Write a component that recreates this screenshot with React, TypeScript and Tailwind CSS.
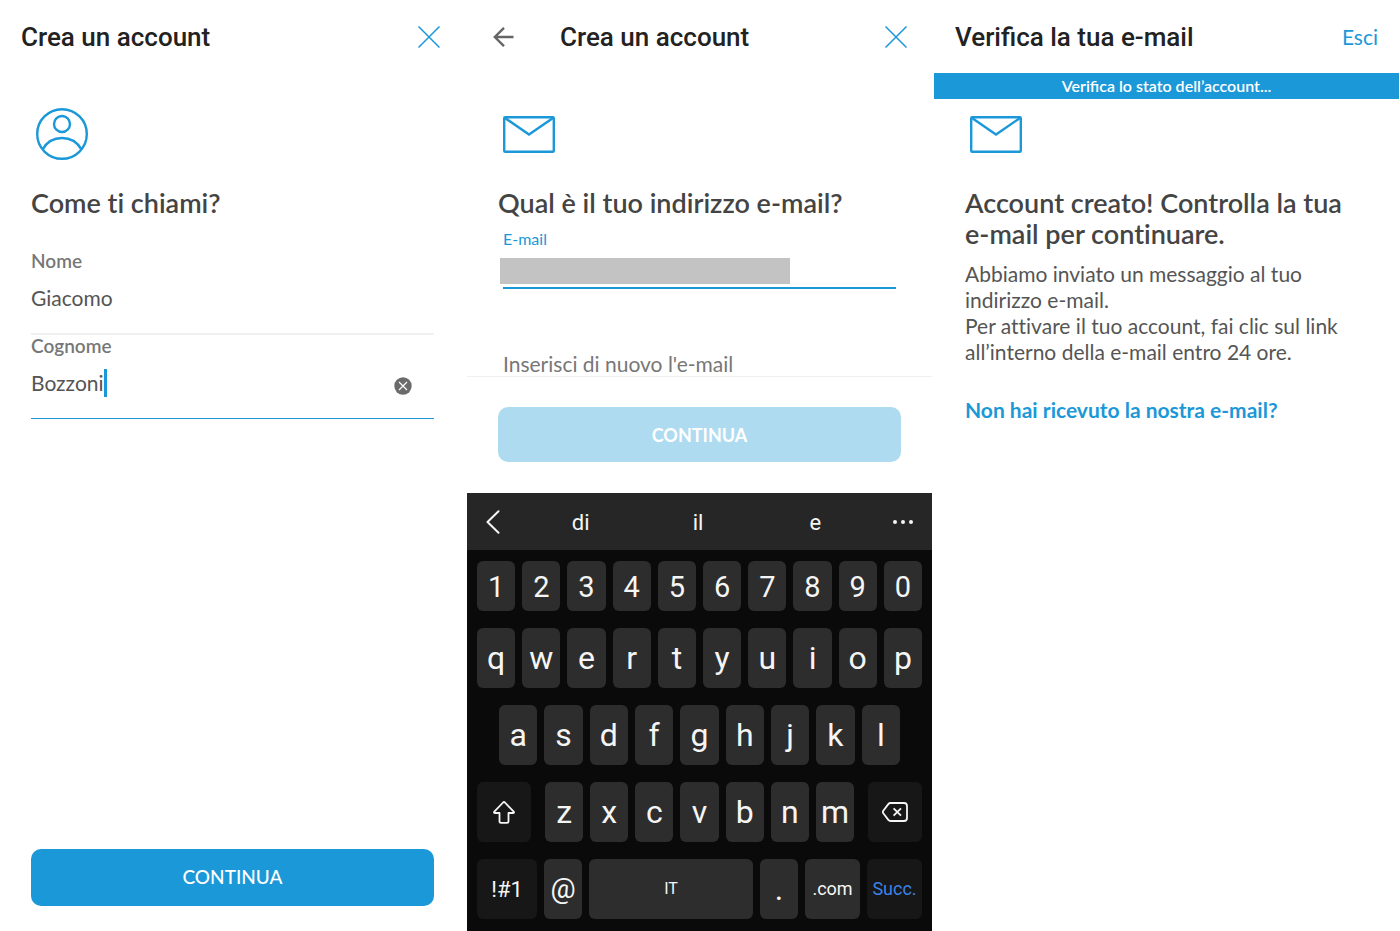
import { useState } from "react";
import type { ReactNode } from "react";

const numberRow = ["1", "2", "3", "4", "5", "6", "7", "8", "9", "0"];
const topRow = ["q", "w", "e", "r", "t", "y", "u", "i", "o", "p"];
const homeRow = ["a", "s", "d", "f", "g", "h", "j", "k", "l"];
const bottomRow = ["z", "x", "c", "v", "b", "n", "m"];
const suggestions = ["di", "il", "e"];

const CloseIcon = () => (
  <svg width="22" height="22" viewBox="0 0 22 22" fill="none" stroke="#1b98d8" strokeWidth="1.5">
    <path d="M0.5 0.5 21.5 21.5M21.5 0.5 0.5 21.5" />
  </svg>
);

const BackIcon = () => (
  <svg width="21" height="20" viewBox="0 0 21 20" fill="none" stroke="#666" strokeWidth="2.4">
    <path d="M20.5 10H1.8M11 0.8 1.8 10l9.2 9.2" />
  </svg>
);

const UserIcon = () => (
  <svg width="52" height="52" viewBox="0 0 52 52" fill="none" stroke="#1b98d8" strokeWidth="2.4">
    <circle cx="26" cy="26" r="24.800" />
    <circle cx="26" cy="16" r="8" />
    <path d="M6.6 41.4C10.6 34.3 17.8 30 26 30s15.400 4.300 19.400 11.400" />
  </svg>
);

const MailIcon = () => (
  <svg width="52" height="52" viewBox="0 0 52 52" fill="none" stroke="#1b98d8" strokeWidth="2.4">
    <rect x="1.200" y="9.200" width="49.600" height="34.600" rx="1" />
    <path d="M2 10 26 26.500 50 10" />
  </svg>
);

const ClearIcon = () => (
  <svg width="18" height="18" viewBox="0 0 18 18" fill="none">
    <circle cx="9" cy="9" r="8.700" fill="#6b6b6b" />
    <path d="M5 5l8 8M13 5l-8 8" stroke="#fff" strokeWidth="1.100" />
  </svg>
);

const ShiftIcon = () => (
  <svg width="22" height="23" viewBox="0 0 22 23" fill="none" stroke="#f5f5f5" strokeWidth="1.800" strokeLinejoin="round">
    <path d="M10.100 1.500 1.300 10.700c-.5.6-.2 1.300.5 1.300h4.700v8.200c0 1 .6 1.600 1.600 1.600h5.800c1 0 1.600-.6 1.600-1.600V12h4.700c.7 0 1-.7.5-1.300L11.900 1.500c-.5-.5-1.300-.5-1.800 0z" />
  </svg>
);

const BackspaceIcon = () => (
  <svg width="26" height="20" viewBox="0 0 26 20" fill="none" stroke="#f5f5f5" strokeWidth="1.800" strokeLinejoin="round">
    <path d="M8.500 1H22c1.800 0 3 1.200 3 3v12c0 1.800-1.200 3-3 3H8.500c-.9 0-1.600-.4-2.200-1.100L1.300 11.300c-.6-.8-.6-1.800 0-2.600l5-6.600C6.900 1.400 7.600 1 8.500 1z" />
    <path d="M11.600 6.300l7.400 7.400M19 6.300l-7.400 7.400" />
  </svg>
);

const Title = ({ children }: { children: ReactNode }) => (
  <h1 className="pt-0.5 font-[Roboto,sans-serif] text-[26px] font-medium text-[#222]">{children}</h1>
);

const Question = ({ children }: { children: ReactNode }) => (
  <h2 className="mt-[27px] text-[27px] leading-[31px] font-semibold text-[#444] [font-variant-ligatures:none]">{children}</h2>
);

const Key = ({ children, className, label }: { children: ReactNode; className: string; label?: string }) => (
  <button type="button" aria-label={label} className={`flex items-center justify-center rounded-md ${className}`}>
    {children}
  </button>
);

const LetterRow = ({ letters }: { letters: string[] }) => (
  <>
    {letters.map((letter) => (
      <Key key={letter} className="h-[60px] min-w-0 flex-1 bg-[#2d2d2d] text-[32px]">
        {letter}
      </Key>
    ))}
  </>
);

const Keyboard = () => (
  <div className="mt-auto bg-[#0a0a0a] font-[Roboto,sans-serif] text-[#f5f5f5]">
    <div className="flex h-[57px] items-center bg-[#262626] px-[19px]">
      <button type="button" aria-label="Indietro">
        <svg width="14" height="24" viewBox="0 0 14 24" fill="none" stroke="#f5f5f5" strokeWidth="2" strokeLinecap="round" strokeLinejoin="round">
          <path d="M12.500 1.200 1.500 12l11 10.800" />
        </svg>
      </button>
      <div className="mr-[19px] ml-[22px] grid flex-1 grid-cols-3">
        {suggestions.map((word) => (
          <button key={word} type="button" className="pt-0.5 text-[22px]">
            {word}
          </button>
        ))}
      </div>
      <button type="button" aria-label="Altro">
        <svg width="20" height="4" viewBox="0 0 20 4" fill="#f5f5f5">
          <circle cx="2" cy="2" r="2" />
          <circle cx="10" cy="2" r="2" />
          <circle cx="18" cy="2" r="2" />
        </svg>
      </button>
    </div>
    <div className="flex flex-col gap-[17px] px-2.5 pt-[11px] pb-3">
      <div className="flex gap-[7px]">
        {numberRow.map((n) => (
          <Key key={n} className="h-[50px] min-w-0 flex-1 bg-[#2d2d2d] pt-1 text-[29px]">
            {n}
          </Key>
        ))}
      </div>
      <div className="flex gap-[7px]">
        <LetterRow letters={topRow} />
      </div>
      <div className="flex gap-[7px] px-[22px]">
        <LetterRow letters={homeRow} />
      </div>
      <div className="flex gap-3.5">
        <Key label="Maiuscole" className="h-[60px] w-[54px] bg-[#171717]">
          <ShiftIcon />
        </Key>
        <div className="flex flex-1 gap-[7px]">
          <LetterRow letters={bottomRow} />
        </div>
        <Key label="Cancella" className="h-[60px] w-[54px] bg-[#171717]">
          <BackspaceIcon />
        </Key>
      </div>
      <div className="flex gap-[7px]">
        <Key className="h-[60px] w-[60px] bg-[#171717] text-[22px]">!#1</Key>
        <Key className="h-[60px] w-[38px] bg-[#2d2d2d] text-[28px]">@</Key>
        <Key className="h-[60px] flex-1 bg-[#2d2d2d] text-base">IT</Key>
        <Key className="h-[60px] w-[38px] bg-[#2d2d2d] text-[32px]">.</Key>
        <Key className="h-[60px] w-[55px] bg-[#2d2d2d] text-lg">.com</Key>
        <Key className="h-[60px] w-[55px] bg-[#171717] text-lg text-[#3b82e8]">Succ.</Key>
      </div>
    </div>
  </div>
);

const NameScreen = () => {
  const [firstName, setFirstName] = useState("Giacomo");
  const [lastName, setLastName] = useState("Bozzoni");

  return (
    <section className="flex flex-col">
      <header className="flex h-[73px] items-center justify-between pr-[25px] pl-[21px]">
        <Title>Crea un account</Title>
        <button type="button" aria-label="Chiudi">
          <CloseIcon />
        </button>
      </header>
      <form className="flex flex-1 flex-col px-[31px] pt-[35px] pb-[25px]" onSubmit={(e) => e.preventDefault()}>
        <div className="pl-[5px]">
          <UserIcon />
        </div>
        <Question>Come ti chiami?</Question>
        <div className="mt-8 border-b-2 border-[#f0f0f0] pb-5">
          <label htmlFor="nome" className="block text-[19px] leading-[22px] font-semibold text-[#777]">
            Nome
          </label>
          <input
            id="nome"
            value={firstName}
            onChange={(e) => setFirstName(e.target.value)}
            className="mt-[11px] block h-[30px] w-full text-[21px] text-[#555] outline-none"
          />
        </div>
        <div className="border-b border-[#1b98d8] pb-5">
          <label htmlFor="cognome" className="block text-[19px] leading-[22px] font-semibold text-[#777]">
            Cognome
          </label>
          <div className="mt-[11px] flex h-[30px] items-center pr-[22px]">
            <input
              id="cognome"
              value={lastName}
              onChange={(e) => setLastName(e.target.value)}
              className="field-sizing-content text-[21px] text-[#555] caret-transparent outline-none"
            />
            <span className="h-7 w-[3px] bg-[#1b98d8]"></span>
            <button type="button" aria-label="Svuota" className="mt-1.5 ml-auto" onClick={() => setLastName("")}>
              <ClearIcon />
            </button>
          </div>
        </div>
        <button type="submit" className="mt-auto h-[57px] rounded-[10px] bg-[#1b98d8] text-[19px] font-medium text-white">
          CONTINUA
        </button>
      </form>
    </section>
  );
};

const EmailScreen = () => (
  <section className="flex flex-col">
    <header className="flex h-[73px] items-center pr-[25px] pl-[26px]">
      <button type="button" aria-label="Indietro" className="mr-[46px]">
        <BackIcon />
      </button>
      <Title>Crea un account</Title>
      <button type="button" aria-label="Chiudi" className="ml-auto">
        <CloseIcon />
      </button>
    </header>
    <form onSubmit={(e) => e.preventDefault()}>
      <div className="px-[31px] pt-[35px]">
        <div className="pl-[5px]">
          <MailIcon />
        </div>
        <Question>Qual è il tuo indirizzo e-mail?</Question>
        <div className="mt-[11px] px-[5px]">
          <label htmlFor="email" className="block text-base leading-5 text-[#1b98d8]">
            E-mail
          </label>
          <div className="mt-[9px] border-b-2 border-[#1b98d8] pb-[3px]">
            <input id="email" type="email" className="-ml-[3px] block h-[26px] w-[290px] bg-[#c3c3c3] outline-none" />
          </div>
          <input
            type="email"
            aria-label="Inserisci di nuovo l'e-mail"
            placeholder="Inserisci di nuovo l'e-mail"
            className="mt-[63px] block h-6 w-full text-[21px] outline-none placeholder:text-[#777]"
          />
        </div>
      </div>
      <div className="border-t border-[#f0f0f0] px-[31px] pt-[30px] pb-[31px]">
        <button type="submit" className="h-[55px] w-full rounded-[10px] bg-[#aedbf0] text-lg font-bold text-white">
          CONTINUA
        </button>
      </div>
    </form>
    <Keyboard />
  </section>
);

const VerifyScreen = () => (
  <section className="flex flex-col">
    <header className="flex h-[73px] items-center justify-between px-[21px]">
      <Title>Verifica la tua e-mail</Title>
      <a href="#" className="text-[21px] text-[#1b98d8]">
        Esci
      </a>
    </header>
    <p className="bg-[#1b98d8] text-center text-base leading-[26px] font-semibold text-white">Verifica lo stato dell’account...</p>
    <div className="px-[31px] pt-[9px]">
      <div className="pl-[5px]">
        <MailIcon />
      </div>
      <Question>
        Account creato! Controlla la tua
        <br />
        e-mail per continuare.
      </Question>
      <p className="mt-3 text-[21px] leading-[26px] text-[#555] [font-variant-ligatures:none]">
        Abbiamo inviato un messaggio al tuo
        <br />
        indirizzo e-mail.
        <br />
        Per attivare il tuo account, fai clic sul link
        <br />
        all’interno della e-mail entro 24 ore.
      </p>
      <a href="#" className="mt-8 block text-[21px] leading-[26px] font-bold text-[#1b98d8]">
        Non hai ricevuto la nostra e-mail?
      </a>
    </div>
  </section>
);

const App = () => {
  return (
    <main className="grid min-h-screen grid-cols-3 gap-0.5 bg-white pr-px font-[Lato,sans-serif]">
      <NameScreen />
      <EmailScreen />
      <VerifyScreen />
    </main>
  );
};

export default App;
